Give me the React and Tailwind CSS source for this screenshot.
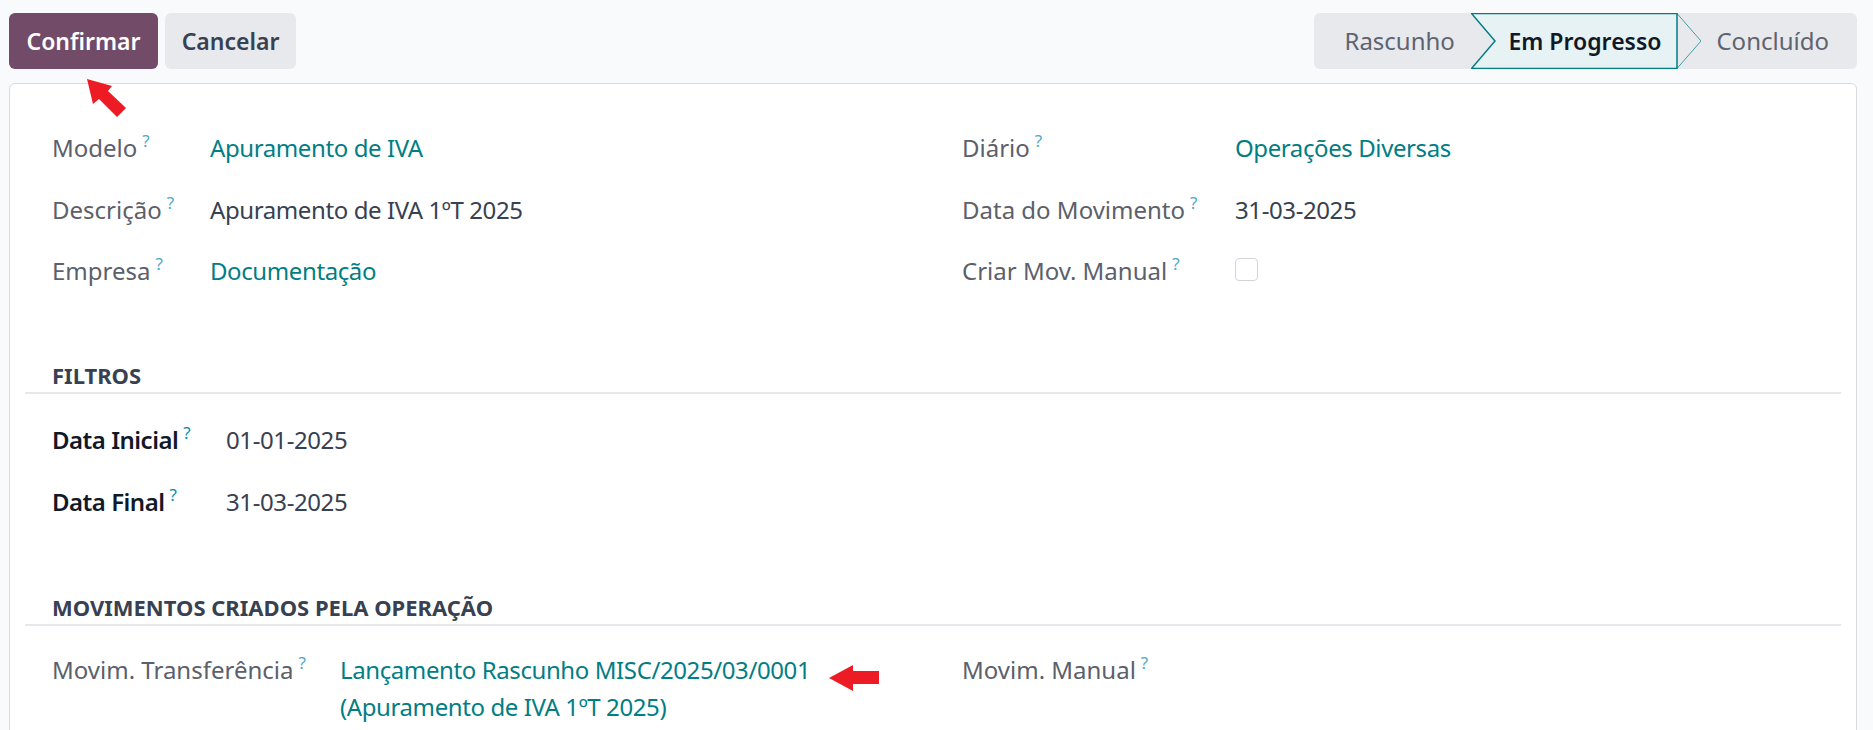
import React from 'react';

const Q = ({ dark }) => (
  <span className={`relative -top-[10px] ml-[5px] text-[17px] leading-none font-normal tracking-normal ${dark ? 'text-[#0d8cb0]' : 'text-[#4ea9c9]'}`}>?</span>
);

const Field = ({ label, labelW, children, strong }) => (
  <div className="flex items-start pt-[12px] pb-[12.5px] leading-[37px]">
    <div
      className={`shrink-0 ${strong ? 'text-[#111827] font-semibold tracking-[-0.5px]' : 'text-[#5b606b]'}`}
      style={{ width: labelW }}
    >
      {label}
      <Q dark={strong} />
    </div>
    <div className="min-w-0 tracking-[-0.4px]">{children}</div>
  </div>
);

const Link = ({ children }) => <span className="text-[#017e84]">{children}</span>;

const SectionTitle = ({ children, className }) => (
  <div className={`border-b-2 border-[#e5e7eb] pl-[27px] pb-[2px] leading-[30px] text-[22px] font-bold text-[#374151] ${className}`}>
    {children}
  </div>
);

const StatusBar = () => (
  <div className="flex h-[56px] items-center rounded-[6px] bg-[#e7e9ed] text-[24px]">
    <div className="w-[157px] pl-[30px] text-[#5f636f]">Rascunho</div>
    <div className="relative flex h-full w-[230px] items-center">
      <svg className="absolute inset-0" width="230" height="56" viewBox="0 0 230 56">
        <polygon points="0.5,0.5 206,0.5 206,55.5 0.5,55.5 24,28" fill="#e6f2f3" stroke="#017e84" strokeWidth="1.5" />
        <polyline points="206,0.5 230,28 206,55.5" fill="none" stroke="#017e84" strokeWidth="1" strokeOpacity="0.7" />
      </svg>
      <span className="relative pl-[37px] text-[23px] font-semibold text-[#111827]">Em Progresso</span>
    </div>
    <div className="pl-[15px] pr-[28px] text-[#5f636f]">Concluído</div>
  </div>
);

// setas vermelhas de anotacao
const ArrowUpLeft = () => (
  <svg className="absolute left-0 top-0" width="140" height="130" viewBox="0 0 140 130">
    <polygon points="87,79 112,86 108,91 126,108 117,117 99,99 93,104" fill="#ed1c24" />
  </svg>
);

const ArrowLeft = () => (
  <svg className="absolute left-[825px] top-[660px]" width="60" height="36" viewBox="825 660 60 36">
    <polygon points="829,678 853,665 853,671 879,671 879,684 853,684 853,691" fill="#ed1c24" />
  </svg>
);

export default function App() {
  return (
    <div className="relative h-[730px] overflow-hidden bg-[#f9fafb] pl-[9px] pr-[16px] pt-[13px] font-['Noto_Sans',sans-serif] text-[24px] text-[#374151]">
      {/* Topo: botoes + estado */}
      <div className="flex items-center justify-between">
        <div className="flex gap-[7px]">
          <button className="h-[56px] w-[149px] rounded-[6px] bg-[#714b67] text-[23px] font-semibold text-white">
            Confirmar
          </button>
          <button className="h-[56px] w-[131px] rounded-[6px] bg-[#e7e9ed] text-[23px] font-semibold text-[#374151]">
            Cancelar
          </button>
        </div>
        <StatusBar />
      </div>

      {/* Formulario */}
      <div className="mt-[14px] h-[700px] rounded-t-[6px] border border-[#d8dadd] bg-white px-[15px] pt-[33px]">
        <div className="grid grid-cols-2">
          <div className="pl-[27px] pr-[29px]">
            <Field label="Modelo" labelW={158}><Link>Apuramento de IVA</Link></Field>
            <Field label="Descrição" labelW={158}>Apuramento de IVA 1ºT 2025</Field>
            <Field label="Empresa" labelW={158}><Link>Documentação</Link></Field>
          </div>
          <div className="px-[29px]">
            <Field label="Diário" labelW={273}><Link>Operações Diversas</Link></Field>
            <Field label="Data do Movimento" labelW={273}>31-03-2025</Field>
            <Field label="Criar Mov. Manual" labelW={273}>
              <div className="mt-[6px] h-[23px] w-[23px] rounded-[4px] border border-[#d1d5db] bg-white" />
            </Field>
          </div>
        </div>

        <SectionTitle className="mt-[58px]">FILTROS</SectionTitle>
        <div className="pl-[27px] pr-[29px] pt-[15.5px]">
          <Field label="Data Inicial" labelW={174} strong>01-01-2025</Field>
          <Field label="Data Final" labelW={174} strong>31-03-2025</Field>
        </div>

        <SectionTitle className="mt-[59.5px]">MOVIMENTOS CRIADOS PELA OPERAÇÃO</SectionTitle>
        <div className="grid grid-cols-2 pt-[13.5px]">
          <div className="pl-[27px] pr-[29px]">
            <Field label="Movim. Transferência" labelW={288}>
              <Link>
                <span className="block">Lançamento Rascunho MISC/2025/03/0001</span>
                <span className="block">(Apuramento de IVA 1ºT 2025)</span>
              </Link>
            </Field>
          </div>
          <div className="px-[29px]">
            <Field label="Movim. Manual" labelW={273}></Field>
          </div>
        </div>
      </div>

      <ArrowUpLeft />
      <ArrowLeft />
    </div>
  );
}
